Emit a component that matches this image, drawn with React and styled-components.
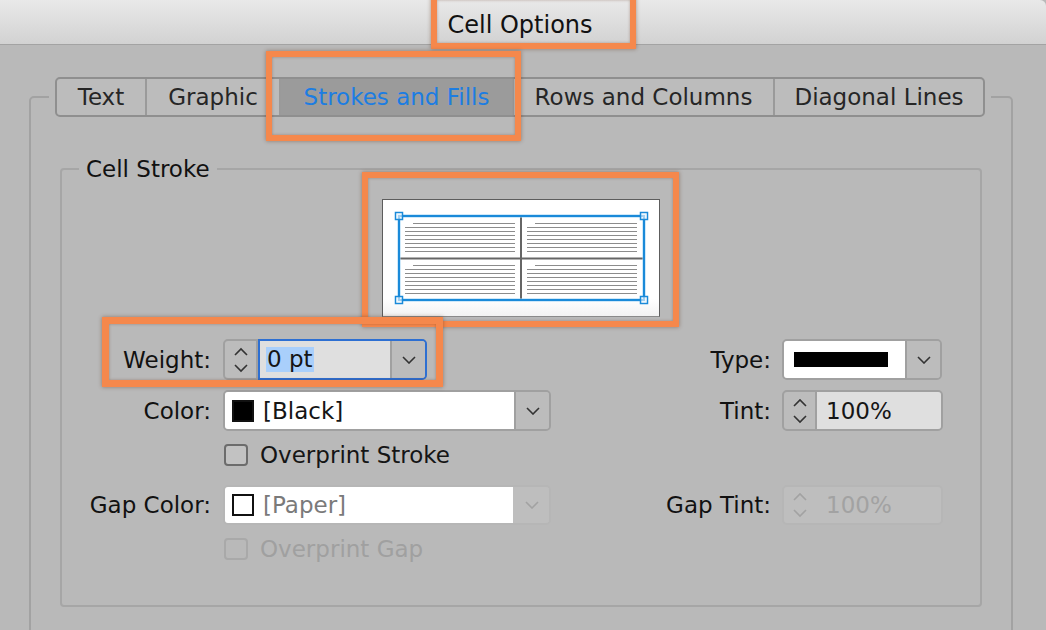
import React from "react";
import styled, { createGlobalStyle } from "styled-components";

const GlobalStyle = createGlobalStyle`
  html, body { margin: 0; padding: 0; }
  body {
    background: #b9b9b9;
    overflow: hidden;
    font-family: "DejaVu Sans", "Liberation Sans", sans-serif;
    color: #151515;
  }
  * { box-sizing: border-box; }
`;

const Window = styled.div`
  position: relative;
  width: 1046px;
  height: 630px;
  overflow: hidden;
  background: #b9b9b9;
`;

const TitleBar = styled.div`
  height: 45px;
  display: flex;
  align-items: center;
  justify-content: center;
  background: linear-gradient(#e9e9e9, #d2d2d2);
  border-bottom: 1px solid #a3a3a3;
  border-top-right-radius: 6px;
  font-size: 24px;
  color: #111;
  padding: 5px 6px 0 0;
`;

const Body = styled.div`
  padding: 32px 33px 0 29px;
`;

const OuterFieldset = styled.fieldset`
  margin: 0;
  padding: 0 0 80px;
  border: 2px solid #a2a2a2;
  border-radius: 5px;
  min-width: 0;
`;

const TabLegend = styled.legend`
  margin-left: 18px;
  padding: 0 6px;
`;

const TabStrip = styled.div`
  display: flex;
  height: 40px;
  border: 2px solid #8f8f8f;
  border-radius: 5px;
  overflow: hidden;
  background: #bcbcbc;
`;

const Tab = styled.div`
  width: ${(p) => p.$w}px;
  display: flex;
  align-items: center;
  justify-content: center;
  font-size: 23px;
  color: ${(p) => (p.$active ? "#1c7de2" : "#262626")};
  background: ${(p) => (p.$active ? "#9b9b9b" : "transparent")};
  border-left: ${(p) => (p.$first ? "none" : "2px solid #9a9a9a")};
  white-space: nowrap;
`;

const CellFieldset = styled.fieldset`
  margin: 38px 29px 0;
  padding: 16px 0 47px;
  border: 2px solid #a6a6a6;
  border-radius: 4px;
  min-width: 0;
`;

const CellLegend = styled.legend`
  margin-left: 17px;
  padding: 0 7px;
  font-size: 23px;
  line-height: 28px;
  color: #111;
`;

const Preview = styled.div`
  width: 278px;
  height: 118px;
  margin: 0 auto 22px;
  background: linear-gradient(#ffffff 85%, #f2f2f2);
  border: 1px solid #5d5d5d;
  border-bottom-color: #8a8a8a;
  display: flex;
`;

const FormRow = styled.div`
  display: grid;
  grid-template-columns: 161px 328px 231px 161px;
  align-items: center;
  margin-top: ${(p) => p.$gap || 0}px;
  height: ${(p) => p.$h}px;
`;

const Label = styled.div`
  justify-self: end;
  padding-right: ${(p) => p.$pr || 12}px;
  font-size: 23px;
  color: #111;
  white-space: nowrap;
`;

const Field = styled.div`
  display: flex;
  width: ${(p) => p.$w}px;
  height: ${(p) => p.$h || 41}px;
  border: 2px solid ${(p) => (p.$disabled ? "#b6b6b6" : "#a0a0a0")};
  border-radius: 5px;
  background: ${(p) => (p.$disabled ? "#bebebe" : "#bcbcbc")};
  overflow: ${(p) => (p.$focus ? "visible" : "hidden")};
`;

const Spin = styled.div`
  width: 33px;
  flex: none;
  display: flex;
  align-items: center;
  justify-content: center;
  border-right: 2px solid ${(p) => (p.$disabled ? "transparent" : "#a0a0a0")};
`;

const Focus = styled.div`
  flex: 1;
  display: flex;
  margin: -2px -2px -2px 0;
  border: 2px solid #2d6fd2;
  border-radius: 0 5px 5px 0;
  overflow: hidden;
`;

const InputPart = styled.div`
  flex: 1;
  display: flex;
  align-items: center;
  padding-left: ${(p) => p.$pl || 8}px;
  background: ${(p) => (p.$disabled ? "transparent" : "#dfdfdf")};
  font-size: 23px;
  color: ${(p) => (p.$disabled ? "#a2a2a2" : "#151515")};
`;

const WhitePart = styled.div`
  width: ${(p) => p.$w}px;
  flex: none;
  display: flex;
  align-items: center;
  gap: 9px;
  padding-left: 7px;
  background: #fff;
  font-size: 23px;
  color: ${(p) => (p.$dim ? "#7a7a7a" : "#151515")};
`;

const ArrowPart = styled.div`
  width: ${(p) => p.$w || 36}px;
  flex: none;
  display: flex;
  align-items: center;
  justify-content: center;
  border-left: 2px solid ${(p) => (p.$disabled ? "transparent" : "#a0a0a0")};
  background: ${(p) => (p.$disabled ? "#bebebe" : "#bcbcbc")};
`;

const Selected = styled.span`
  background: #a9cffb;
  padding: 0 1px;
  line-height: 25px;
`;

const Swatch = styled.span`
  width: 22px;
  height: 22px;
  flex: none;
  background: ${(p) => (p.$empty ? "#fff" : "#000")};
  border: 2px solid #111;
`;

const StrokeBar = styled.span`
  width: 94px;
  height: 15px;
  background: #000;
  margin-left: 3px;
`;

const CheckRow = styled.label`
  grid-column: 2 / 4;
  display: flex;
  align-items: center;
  gap: 12px;
  font-size: 23px;
  color: ${(p) => (p.$disabled ? "#a0a0a0" : "#151515")};
  padding-left: 1px;
`;

const Box = styled.span`
  width: 24px;
  height: 22px;
  border: 2px solid ${(p) => (p.$disabled ? "#a9a9a9" : "#6c6c6c")};
  border-radius: 4px;
  background: ${(p) => (p.$disabled ? "transparent" : "#c2c2c2")};
`;

const Orange = styled.div`
  position: absolute;
  left: ${(p) => p.$x}px;
  top: ${(p) => p.$y}px;
  width: ${(p) => p.$w}px;
  height: ${(p) => p.$h}px;
  border: ${(p) => p.$t || 6}px solid #f5884c;
  box-shadow: 0 0 4px rgba(90, 40, 10, 0.45), inset 0 0 3px rgba(90, 40, 10, 0.35);
  pointer-events: none;
`;

const Chev = ({ dir = "down", color = "#333" }) => (
  <svg width="14" height="8" viewBox="0 0 14 8">
    <polyline
      points={dir === "down" ? "1,1 7,7 13,1" : "1,7 7,1 13,7"}
      fill="none"
      stroke={color}
      strokeWidth="1.6"
    />
  </svg>
);

const Updown = ({ color = "#333" }) => (
  <svg width="16" height="30" viewBox="0 0 16 30">
    <polyline points="2,10 8,4 14,10" fill="none" stroke={color} strokeWidth="1.6" />
    <polyline points="2,20 8,26 14,20" fill="none" stroke={color} strokeWidth="1.6" />
  </svg>
);

const cellLines = (x0, x1, y0, firstIndent) => {
  const out = [];
  for (let i = 0; i < 8; i++) {
    const y = y0 + i * 4;
    out.push(
      <line key={`${x0}-${y}`} x1={i === 0 ? x0 + firstIndent : x0} x2={x1} y1={y} y2={y} stroke="#8c8c8c" strokeWidth="1.2" />
    );
  }
  return out;
};

const PreviewArt = () => (
  <svg width="276" height="116" viewBox="0 0 276 116">
    {cellLines(22, 132, 23.5, 8)}
    {cellLines(144, 254, 23.5, 8)}
    {cellLines(22, 132, 65.5, 8)}
    {cellLines(144, 254, 65.5, 8)}
    <line x1="138" y1="16" x2="138" y2="100" stroke="#666" strokeWidth="2" />
    <line x1="16" y1="58.5" x2="260" y2="58.5" stroke="#666" strokeWidth="2" />
    <rect x="16" y="16" width="245" height="84" fill="none" stroke="#9fd3f5" strokeWidth="4" opacity="0.5" />
    <rect x="16" y="16" width="245" height="84" fill="none" stroke="#1a8ad9" strokeWidth="2" />
    {[
      [16, 16],
      [261, 16],
      [16, 100],
      [261, 100],
    ].map(([cx, cy]) => (
      <rect key={`${cx}-${cy}`} x={cx - 3.5} y={cy - 3.5} width="7" height="7" fill="#fff" fillOpacity="0.6" stroke="#1a8ad9" strokeWidth="1.5" />
    ))}
  </svg>
);

const tabs = [
  { label: "Text", w: 88 },
  { label: "Graphic", w: 134 },
  { label: "Strokes and Fills", w: 233, active: true },
  { label: "Rows and Columns", w: 261 },
  { label: "Diagonal Lines", w: 210 },
];

export default function App() {
  return (
    <>
      <GlobalStyle />
      <Window>
        <TitleBar>Cell Options</TitleBar>
        <Body>
          <OuterFieldset>
            <TabLegend>
              <TabStrip>
                {tabs.map((t, i) => (
                  <Tab key={t.label} $w={t.w} $active={t.active} $first={i === 0}>
                    {t.label}
                  </Tab>
                ))}
              </TabStrip>
            </TabLegend>
            <CellFieldset>
              <CellLegend>Cell Stroke</CellLegend>
              <Preview>
                <PreviewArt />
              </Preview>

              <FormRow $h={41}>
                <Label>Weight:</Label>
                <Field $w={204} $focus>
                  <Spin>
                    <Updown />
                  </Spin>
                  <Focus>
                    <InputPart $pl={6}>
                      <Selected>0 pt</Selected>
                    </InputPart>
                    <ArrowPart $w={35}>
                      <Chev />
                    </ArrowPart>
                  </Focus>
                </Field>
                <Label $pr={11}>Type:</Label>
                <Field $w={160}>
                  <WhitePart $w={121}>
                    <StrokeBar />
                  </WhitePart>
                  <ArrowPart>
                    <Chev />
                  </ArrowPart>
                </Field>
              </FormRow>

              <FormRow $h={41} $gap={10}>
                <Label>Color:</Label>
                <Field $w={328}>
                  <WhitePart $w={289}>
                    <Swatch />
                    [Black]
                  </WhitePart>
                  <ArrowPart>
                    <Chev />
                  </ArrowPart>
                </Field>
                <Label $pr={11}>Tint:</Label>
                <Field $w={161}>
                  <Spin>
                    <Updown />
                  </Spin>
                  <InputPart $pl={9}>100%</InputPart>
                </Field>
              </FormRow>

              <FormRow $h={22} $gap={11}>
                <CheckRow>
                  <Box />
                  Overprint Stroke
                </CheckRow>
              </FormRow>

              <FormRow $h={40} $gap={21}>
                <Label>Gap Color:</Label>
                <Field $w={328} $h={40} $disabled>
                  <WhitePart $w={288} $dim>
                    <Swatch $empty />
                    [Paper]
                  </WhitePart>
                  <ArrowPart $disabled>
                    <Chev color="#a2a2a2" />
                  </ArrowPart>
                </Field>
                <Label $pr={11}>Gap Tint:</Label>
                <Field $w={161} $h={40} $disabled>
                  <Spin $disabled>
                    <Updown color="#a2a2a2" />
                  </Spin>
                  <InputPart $pl={9} $disabled>
                    100%
                  </InputPart>
                </Field>
              </FormRow>

              <FormRow $h={22} $gap={11}>
                <CheckRow $disabled>
                  <Box $disabled />
                  Overprint Gap
                </CheckRow>
              </FormRow>
            </CellFieldset>
          </OuterFieldset>
        </Body>

        <Orange $x={431} $y={-6} $w={205} $h={55} />
        <Orange $x={266} $y={51} $w={255} $h={90} />
        <Orange $x={362} $y={172} $w={317} $h={155} />
        <Orange $x={102} $y={317} $w={341} $h={70} $t={7} />
      </Window>
    </>
  );
}
